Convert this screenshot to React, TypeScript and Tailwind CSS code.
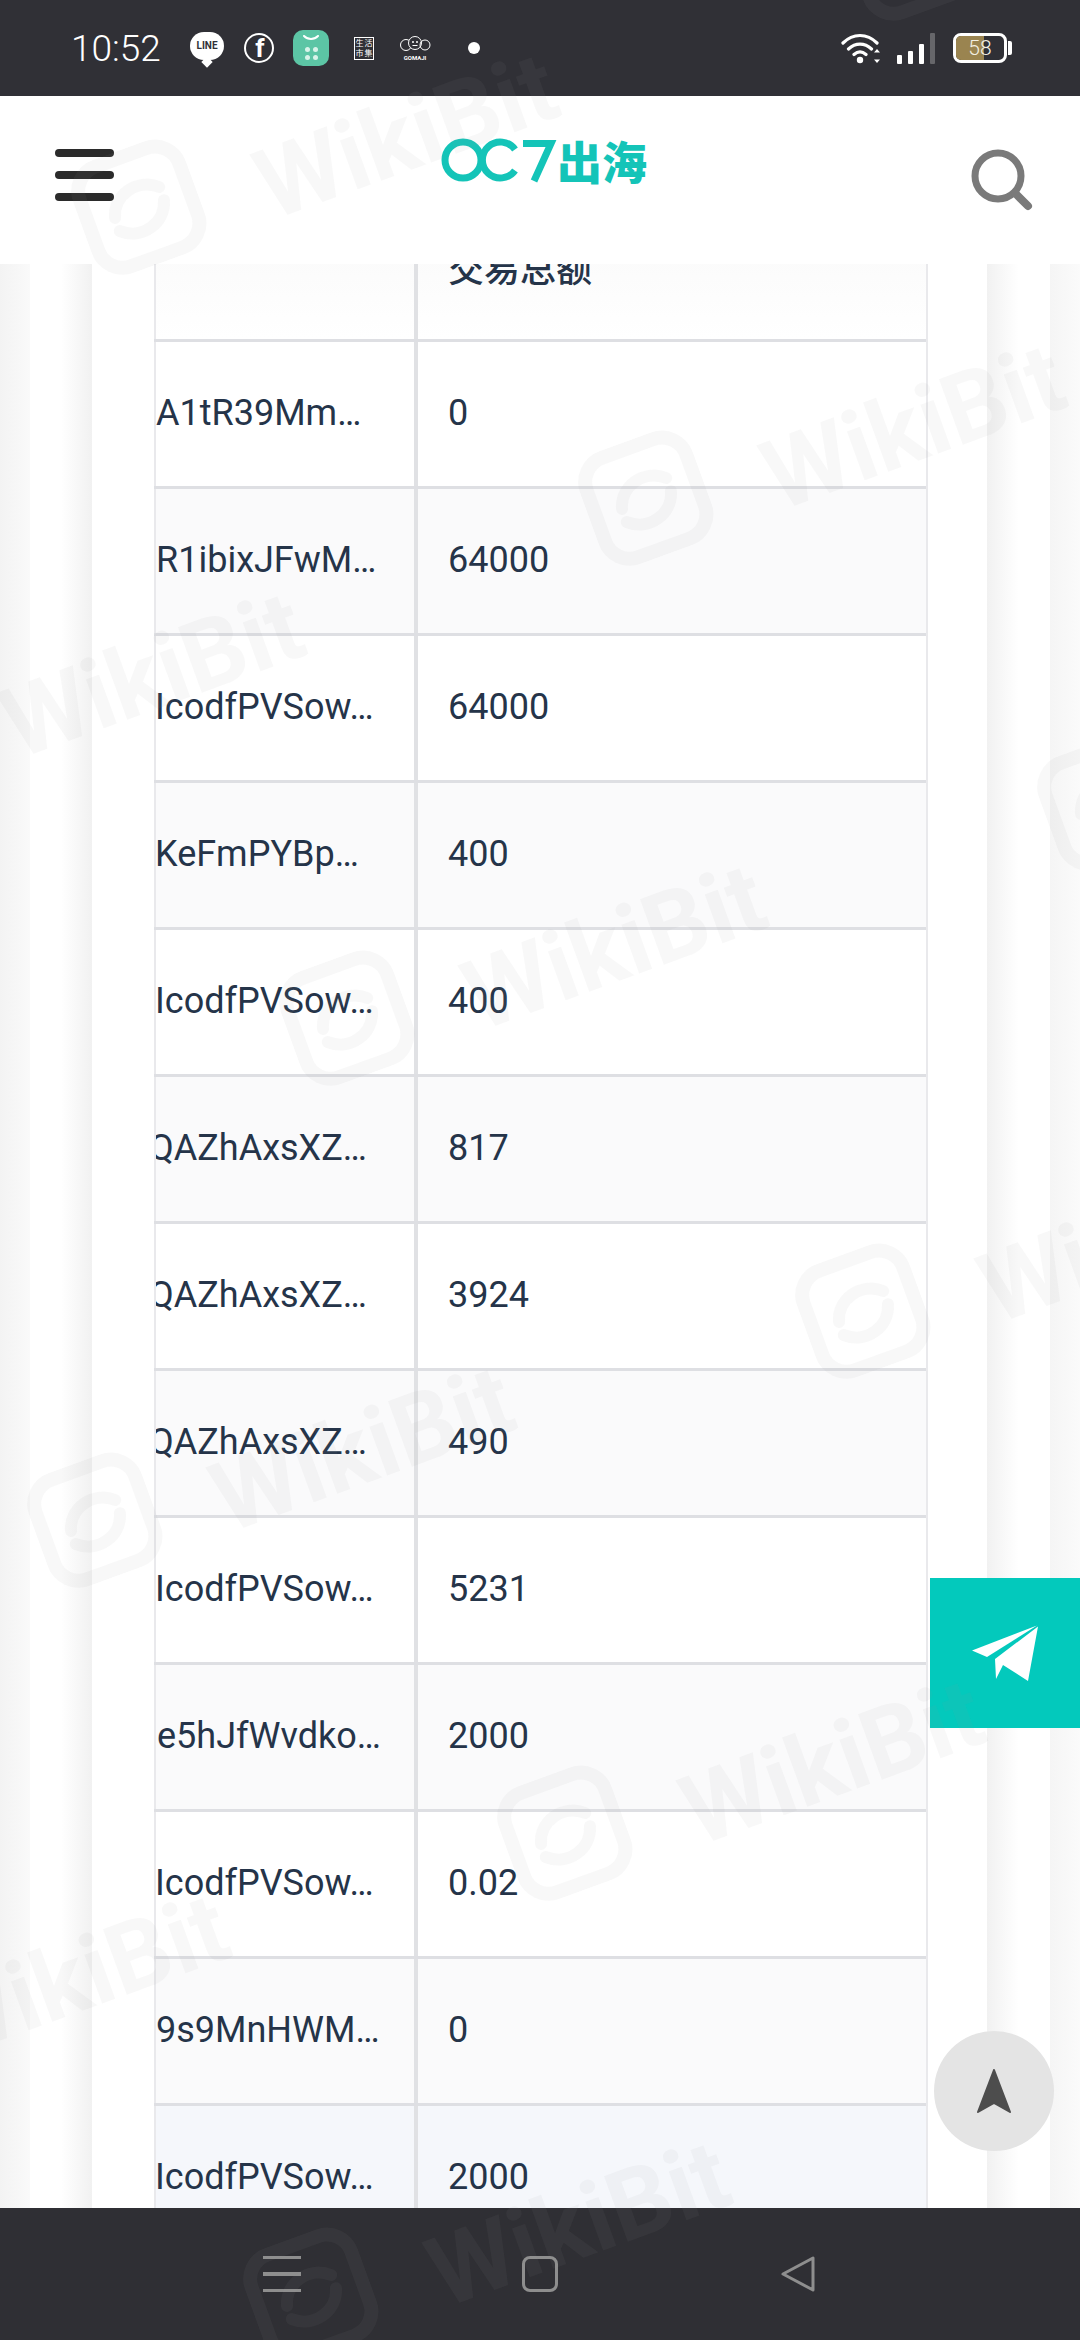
import React from 'react';

const rows = [
  { addr: 'A1tR39Mm…', amount: '0', bg: 'bg-white', shift: 'ml-[0px]' },
  { addr: 'R1ibixJFwM…', amount: '64000', bg: 'bg-[#fafafb]', shift: 'ml-[0px]' },
  { addr: 'IcodfPVSow…', amount: '64000', bg: 'bg-white', shift: 'ml-[-1px]' },
  { addr: 'KeFmPYBp…', amount: '400', bg: 'bg-[#fafafb]', shift: 'ml-[-1px]' },
  { addr: 'IcodfPVSow…', amount: '400', bg: 'bg-white', shift: 'ml-[-1px]' },
  { addr: 'QAZhAxsXZ…', amount: '817', bg: 'bg-[#fafafb]', shift: 'ml-[-7px]' },
  { addr: 'QAZhAxsXZ…', amount: '3924', bg: 'bg-white', shift: 'ml-[-7px]' },
  { addr: 'QAZhAxsXZ…', amount: '490', bg: 'bg-[#fafafb]', shift: 'ml-[-7px]' },
  { addr: 'IcodfPVSow…', amount: '5231', bg: 'bg-white', shift: 'ml-[-1px]' },
  { addr: 'e5hJfWvdko…', amount: '2000', bg: 'bg-[#fafafb]', shift: 'ml-[1px]' },
  { addr: 'IcodfPVSow…', amount: '0.02', bg: 'bg-white', shift: 'ml-[-1px]' },
  { addr: '9s9MnHWM…', amount: '0', bg: 'bg-[#fafafb]', shift: 'ml-[0px]' },
  { addr: 'IcodfPVSow…', amount: '2000', bg: 'bg-[#f5f7fb]', shift: 'ml-[-1px]' },
];

// logo centres of the repeated watermark
const marks = [
  [134, 194], [641, 485], [-120, 733], [342, 1005], [858, 1298], [1100, 790],
  [90, 1507], [560, 1820], [-195, 2035], [306, 2282], [905, -60],
];

const Watermark: React.FC<{ x: number; y: number }> = ({ x, y }) => (
  <div
    className="absolute flex items-center gap-[60px] origin-[60px_60px] rotate-[-20deg] text-[rgba(150,150,150,0.07)] whitespace-nowrap"
    style={{ left: x - 60, top: y - 60 }}
  >
    <svg width="120" height="120" viewBox="0 0 120 120" fill="none" stroke="currentColor">
      <rect x="7" y="7" width="106" height="106" rx="26" strokeWidth="14" />
      <path d="M34 62c6-22 34-30 52-14M86 62c-6 22-34 30-52 14" strokeWidth="12" strokeLinecap="round" />
    </svg>
    <span className="font-['Roboto',sans-serif] font-bold text-[98px] leading-none mt-[50px]">WikiBit</span>
  </div>
);

const StatusBar: React.FC = () => (
  <div className="h-[96px] shrink-0 bg-[#303036] flex items-center pl-[71px] pr-[68px] text-white">
    <span className="w-[119px] shrink-0 font-['Roboto',sans-serif] font-light text-[37px] leading-none">10:52</span>
    {/* LINE */}
    <div className="relative w-[34px] h-[28px] mb-[4px] rounded-[14px] bg-white flex items-center justify-center shrink-0">
      <span className="font-['Roboto',sans-serif] font-bold text-[10px] leading-none text-[#303036]">LINE</span>
      <div className="absolute bottom-[-6px] left-[13px] w-[8px] h-[8px] rotate-45 bg-white" />
    </div>
    {/* Facebook */}
    <div className="ml-[20px] w-[30px] h-[30px] rounded-full border-2 border-white flex items-end justify-center shrink-0">
      <span className="font-['Roboto',sans-serif] font-bold text-[26px] leading-[26px] ml-[2px]">f</span>
    </div>
    <div className="ml-[19px] w-[36px] h-[36px] rounded-[10px] bg-[#5cc5a5] flex flex-col items-center pt-[5px] shrink-0">
      <svg width="18" height="6" viewBox="0 0 18 6" fill="none">
        <path d="M2 1c4 4 10 4 14 0" stroke="#fff" strokeWidth="2" strokeLinecap="round" />
      </svg>
      <div className="mt-[6px] grid grid-cols-2 gap-[3px]">
        <div className="w-[5px] h-[5px] rounded-full bg-[#d9f3ea]" />
        <div className="w-[5px] h-[5px] rounded-full bg-[#d9f3ea]" />
        <div className="w-[5px] h-[5px] rounded-full bg-[#d9f3ea]" />
        <div className="w-[5px] h-[5px] rounded-full bg-[#d9f3ea]" />
      </div>
    </div>
    {/* 生活市集 */}
    <div className="ml-[25px] w-[20px] h-[23px] border border-white grid grid-cols-2 items-center justify-items-center font-['Noto_Sans_CJK_TC',sans-serif] text-[8px] leading-[8px] shrink-0">
      <span>生</span>
      <span>活</span>
      <span>市</span>
      <span>集</span>
    </div>
    {/* GOMAJI */}
    <div className="ml-[24px] w-[34px] flex flex-col items-center shrink-0">
      <svg width="32" height="18" viewBox="0 0 32 18" fill="none" stroke="#fff" strokeWidth="1">
        <circle cx="7" cy="10" r="5.5" />
        <circle cx="16" cy="8" r="6.5" fill="#303036" />
        <circle cx="26" cy="10" r="5" />
        <circle cx="14" cy="7" r=".6" fill="#fff" />
        <circle cx="18" cy="7" r=".6" fill="#fff" />
        <path d="M13.5 10.5h5" />
      </svg>
      <span className="font-['Roboto',sans-serif] font-bold text-[6px] leading-[8px] mt-[1px]">GOMAJI</span>
    </div>
    <div className="ml-[36px] w-[12px] h-[12px] rounded-full bg-white shrink-0" />
    <div className="flex-1" />
    {/* wifi */}
    <svg width="40" height="31" viewBox="0 0 40 31" fill="none" className="shrink-0">
      <path d="M2 10c10-10 24-10 34 0M7.500 16c7-6.500 16-6.500 23 0M13 21.500c4-3.500 8-3.500 12 0" stroke="#fff" strokeWidth="3.200" strokeLinecap="round" />
      <circle cx="19" cy="27" r="3.200" fill="#fff" />
      <path d="M36 16l-3 3.500h6zM36 30l-3-3.500h6z" fill="#fff" />
    </svg>
    {/* signal */}
    <div className="ml-[16px] flex items-end gap-[6px] h-[31px] shrink-0">
      <div className="w-[5px] h-[9px] rounded-[1px] bg-white" />
      <div className="w-[5px] h-[13px] rounded-[1px] bg-white" />
      <div className="w-[5px] h-[20px] rounded-[1px] bg-white" />
      <div className="w-[5px] h-[31px] rounded-[1px] bg-[#66666a]" />
    </div>
    {/* battery */}
    <div className="ml-[18px] w-[54px] h-[30px] rounded-[8px] border-[3px] border-white relative overflow-hidden shrink-0">
      <div className="w-[28px] h-full bg-[#9a8450]" />
      <span className="absolute inset-0 flex items-center justify-center font-['Roboto',sans-serif] font-light text-[21px] leading-none text-[#f3efe2]">58</span>
    </div>
    <div className="ml-[1px] w-[4px] h-[14px] rounded-r-[2px] bg-white shrink-0" />
  </div>
);

const Header: React.FC = () => (
  <div className="relative z-10 h-[168px] shrink-0 bg-white flex items-center pl-[55px] pr-[46px] justify-between">
    <div className="flex flex-col gap-[14px] pb-[10px]">
      <div className="w-[59px] h-[8px] rounded-full bg-[#2b2b2b]" />
      <div className="w-[59px] h-[8px] rounded-full bg-[#2b2b2b]" />
      <div className="w-[59px] h-[8px] rounded-full bg-[#2b2b2b]" />
    </div>
    <div className="flex items-center mb-[40px] ml-[4px] text-[#14c4b8]">
      <svg width="116" height="46" viewBox="0 0 116 46" fill="none" stroke="currentColor" strokeWidth="7">
        <circle cx="22" cy="23" r="18" />
        <path d="M74 12.500A18 18 0 1 0 74 33.500" />
        <path d="M82 6.500h28L93 44" />
      </svg>
      <span className="font-['Noto_Sans_CJK_SC',sans-serif] font-black text-[45px] leading-none">出海</span>
    </div>
    <svg width="64" height="64" viewBox="0 0 64 64" fill="none" stroke="#7a7a7a">
      <circle cx="28" cy="28" r="23" strokeWidth="7" />
      <path d="M45 45l13 13" strokeWidth="8" strokeLinecap="round" />
    </svg>
  </div>
);

const Cell: React.FC<{ className: string; children: React.ReactNode }> = ({ className, children }) => (
  <div className={`h-full flex items-center overflow-hidden pb-[2px] whitespace-nowrap ${className}`}>{children}</div>
);

const Table: React.FC = () => (
  <div className="w-[774px] mt-[-69px] font-['Roboto',sans-serif] text-[36px] leading-none text-[#253449] border-r-2 border-[#e9e9ec]">
    <div className="h-[147px] flex border-b-[3px] border-[#dedfe3] bg-gradient-to-b from-[#f8f8f8] to-white">
      <Cell className="w-[260px] border-l-2 border-[#e9e9ec]"> </Cell>
      <Cell className="flex-1 border-l-[4px] border-[#e0e1e4] pl-[30px]">
        <span className="font-['Noto_Sans_CJK_SC',sans-serif] font-medium">交易总额</span>
      </Cell>
    </div>
    {rows.map((row, i) => (
      <div key={i} className={`h-[147px] flex border-b-[3px] border-[#dedfe3] ${row.bg}`}>
        <Cell className="w-[260px] border-l-2 border-[#e9e9ec]">
          <span className={row.shift}>{row.addr}</span>
        </Cell>
        <Cell className="flex-1 border-l-[4px] border-[#e0e1e4] pl-[30px]">{row.amount}</Cell>
      </div>
    ))}
  </div>
);

const NavBar: React.FC = () => (
  <div className="relative z-10 h-[132px] shrink-0 bg-[#2f2f34] flex items-center pl-[263px]">
    <div className="w-[38px] flex flex-col gap-[13px]">
      <div className="h-[3px] bg-[#8e8e8e]" />
      <div className="h-[4px] bg-[#8e8e8e]" />
      <div className="h-[3px] bg-[#8e8e8e]" />
    </div>
    <div className="ml-[221px] w-[36px] h-[36px] rounded-[8px] border-[3px] border-[#8e8e8e]" />
    <svg width="36" height="38" viewBox="0 0 36 38" fill="none" className="ml-[222px]">
      <path d="M33 3v32L3 19z" stroke="#8e8e8e" strokeWidth="3" strokeLinejoin="round" />
    </svg>
  </div>
);

export default function App() {
  return (
    <div className="relative w-[1080px] h-[2340px] overflow-hidden flex flex-col bg-white">
      <StatusBar />
      <Header />
      <div className="flex-1 min-h-0 flex overflow-hidden">
        <div className="w-[30px] bg-gradient-to-r from-[#f3f3f3] to-[#fafafa]" />
        <div className="w-[62px] bg-gradient-to-r from-white from-50% to-[#f1f1f1]" />
        <div className="w-[62px]" />
        <Table />
        <div className="w-[59px]" />
        <div className="w-[63px] bg-gradient-to-r from-[#f1f1f1] to-white to-50%" />
        <div className="w-[30px] bg-gradient-to-r from-[#f5f5f5] to-[#fbfbfb]" />
      </div>
      <NavBar />

      {/* floating buttons */}
      <div className="absolute z-20 left-[930px] top-[1578px] w-[150px] h-[150px] bg-[#03c9bc] flex items-center justify-center">
        <svg width="68" height="56" viewBox="0 0 68 56" fill="#fff">
          <path d="M66 0.500L1 25.500l15 6.500z" />
          <path d="M67 1.500L57 56l-25-16-7 14-1-20z" />
        </svg>
      </div>
      <div className="absolute z-20 left-[934px] top-[2031px] w-[120px] h-[120px] rounded-full bg-[#e4e4e4] flex items-center justify-center">
        <svg width="36" height="46" viewBox="0 0 36 46" fill="#4d4d4d" stroke="#4d4d4d" strokeWidth="2" strokeLinejoin="round">
          <path d="M18 2L2 44l16-9 16 9z" />
        </svg>
      </div>

      {/* watermark over everything */}
      <div className="absolute inset-0 z-30 pointer-events-none overflow-hidden">
        {marks.map(([x, y], i) => (
          <Watermark key={i} x={x} y={y} />
        ))}
      </div>
    </div>
  );
}
